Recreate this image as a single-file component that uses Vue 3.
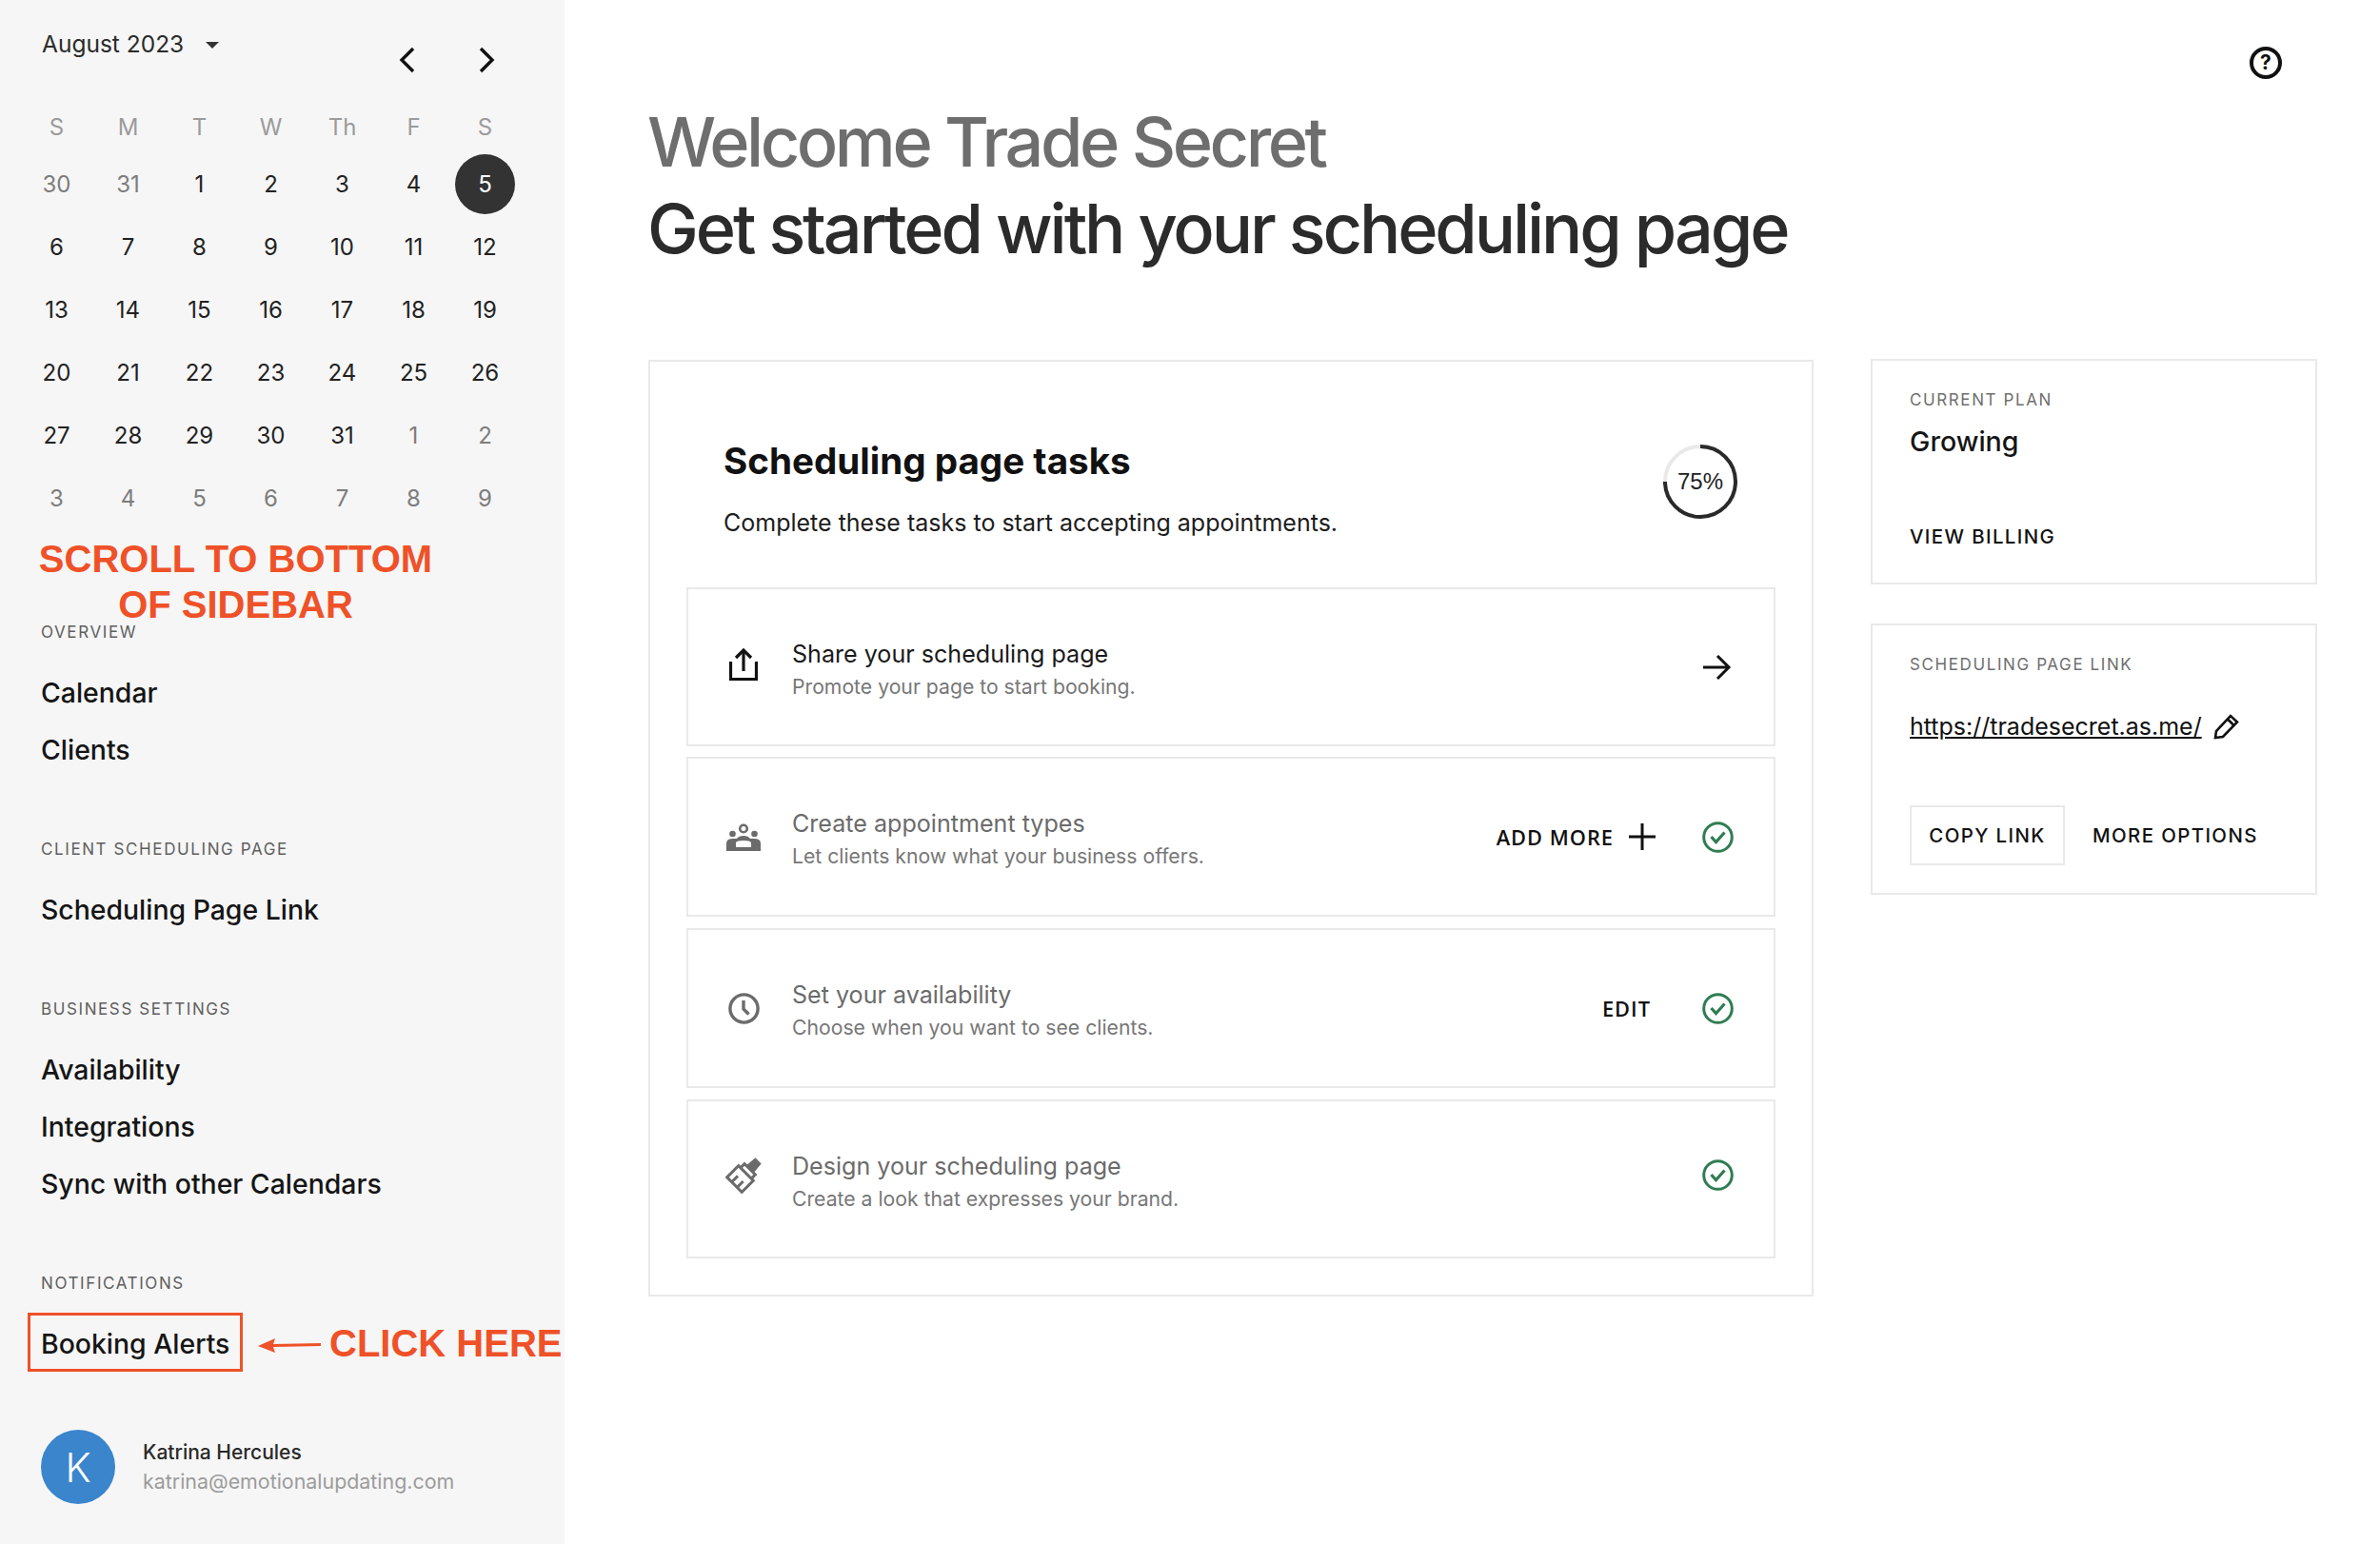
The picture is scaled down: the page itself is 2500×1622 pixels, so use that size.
<script setup>
const weekdays = ['S', 'M', 'T', 'W', 'Th', 'F', 'S']

const days = [
  { n: 30, muted: true }, { n: 31, muted: true }, { n: 1 }, { n: 2 }, { n: 3 }, { n: 4 }, { n: 5, today: true },
  { n: 6 }, { n: 7 }, { n: 8 }, { n: 9 }, { n: 10 }, { n: 11 }, { n: 12 },
  { n: 13 }, { n: 14 }, { n: 15 }, { n: 16 }, { n: 17 }, { n: 18 }, { n: 19 },
  { n: 20 }, { n: 21 }, { n: 22 }, { n: 23 }, { n: 24 }, { n: 25 }, { n: 26 },
  { n: 27 }, { n: 28 }, { n: 29 }, { n: 30 }, { n: 31 }, { n: 1, muted: true }, { n: 2, muted: true },
  { n: 3, muted: true }, { n: 4, muted: true }, { n: 5, muted: true }, { n: 6, muted: true }, { n: 7, muted: true }, { n: 8, muted: true }, { n: 9, muted: true }
]

const navGroups = [
  { label: 'OVERVIEW', items: ['Calendar', 'Clients'] },
  { label: 'CLIENT SCHEDULING PAGE', items: ['Scheduling Page Link'] },
  { label: 'BUSINESS SETTINGS', items: ['Availability', 'Integrations', 'Sync with other Calendars'] },
  { label: 'NOTIFICATIONS', items: ['Booking Alerts'] }
]
</script>

<template>
  <div class="page">
    <aside class="sidebar">
      <div class="cal-head">
        <span class="month">August 2023</span>
        <span class="caret"></span>
        <div class="cal-nav">
          <svg width="20" height="28" viewBox="0 0 20 28" fill="none" stroke="#111" stroke-width="3.4"><path d="M17 2 L5 14 L17 26" /></svg>
          <svg width="20" height="28" viewBox="0 0 20 28" fill="none" stroke="#111" stroke-width="3.4"><path d="M3 2 L15 14 L3 26" /></svg>
        </div>
      </div>
      <div class="cal-grid">
        <div v-for="(d, i) in weekdays" :key="'w' + i" class="weekday">{{ d }}</div>
        <div v-for="(d, i) in days" :key="i" class="day" :class="{ muted: d.muted }">
          <span :class="{ today: d.today }">{{ d.n }}</span>
        </div>
      </div>

      <nav class="nav">
        <div v-for="g in navGroups" :key="g.label" class="nav-group">
          <div class="nav-label">{{ g.label }}</div>
          <div class="nav-items">
            <a v-for="item in g.items" :key="item" class="nav-item">{{ item }}</a>
          </div>
        </div>
      </nav>

      <div class="user">
        <div class="avatar">K</div>
        <div>
          <div class="user-name">Katrina Hercules</div>
          <div class="user-mail">katrina@emotionalupdating.com</div>
        </div>
      </div>

      <!-- red annotations drawn over the screenshot -->
      <div class="note-scroll">SCROLL TO BOTTOM<br />OF SIDEBAR</div>
      <div class="note-box"></div>
      <svg class="note-arrow" width="66" height="20" viewBox="0 0 66 20">
        <path d="M0 11 L18 3 L16 9 L66 8 L66 11 L16 12 L18 18 Z" fill="#ef5128" />
      </svg>
      <div class="note-click">CLICK HERE</div>
    </aside>

    <main class="main">
      <div class="help">?</div>
      <h1 class="title">
        <span class="title-light">Welcome Trade Secret</span>
        <span>Get started with your scheduling page</span>
      </h1>

      <div class="columns">
        <section class="tasks">
          <div class="tasks-head">
            <div>
              <h2>Scheduling page tasks</h2>
              <p>Complete these tasks to start accepting appointments.</p>
            </div>
            <div class="progress">
              <svg width="78" height="78" viewBox="0 0 78 78" fill="none" stroke-width="4">
                <circle cx="39" cy="39" r="37" stroke="#e9e9e9" />
                <path d="M39 2 A37 37 0 1 1 2 39" stroke="#2a2a2a" />
              </svg>
              <span>75%</span>
            </div>
          </div>

          <div class="task task-first">
            <span class="task-icon">
              <svg width="30" height="36" viewBox="0 0 30 36" fill="none" stroke="#111" stroke-width="3.2">
                <path d="M1.5 15 V33.5 H28.5 V15" />
                <path d="M15 3 V25" />
                <path d="M7 11 L15 3 L23 11" />
              </svg>
            </span>
            <div class="task-text">
              <div class="task-title dark">Share your scheduling page</div>
              <div class="task-sub">Promote your page to start booking.</div>
            </div>
            <svg class="arrow" width="32" height="28" viewBox="0 0 32 28" fill="none" stroke="#111" stroke-width="3">
              <path d="M2 14 H29" />
              <path d="M17 2 L29 14 L17 26" />
            </svg>
          </div>

          <div class="task task-mid task-second">
            <span class="task-icon">
              <svg width="36" height="29" viewBox="0 0 36 29" fill="#6b6b6b">
                <circle cx="18" cy="5.5" r="3.8" fill="none" stroke="#6b6b6b" stroke-width="2.6" />
                <circle cx="6.5" cy="11" r="3.3" />
                <circle cx="29.5" cy="11" r="3.3" />
                <path fill-rule="evenodd" d="M0 29 V21 Q0 16 7 16 H11 Q13 13 18 13 Q23 13 25 16 H29 Q36 16 36 21 V29 Z M10 25 H26 V20 Q25 18 18 18 Q11 18 10 20 Z" />
              </svg>
            </span>
            <div class="task-text">
              <div class="task-title">Create appointment types</div>
              <div class="task-sub">Let clients know what your business offers.</div>
            </div>
            <a class="action">ADD MORE</a>
            <svg class="plus" width="30" height="30" viewBox="0 0 30 30" stroke="#111" stroke-width="3">
              <path d="M1 15 H29 M15 1 V29" />
            </svg>
            <svg class="check" width="33" height="33" viewBox="0 0 33 33" fill="none" stroke="#2f7d52">
              <circle cx="16.5" cy="16.5" r="14.8" stroke-width="3" />
              <path d="M9.5 16 L14.5 21.5 L23.5 11.5" stroke-width="3.2" />
            </svg>
          </div>

          <div class="task task-mid">
            <span class="task-icon">
              <svg width="33" height="33" viewBox="0 0 33 33" fill="none" stroke="#6b6b6b" stroke-width="3.4">
                <circle cx="16.5" cy="16.5" r="14.6" />
                <path d="M16 8 V17 L21.5 22.5" />
              </svg>
            </span>
            <div class="task-text">
              <div class="task-title">Set your availability</div>
              <div class="task-sub">Choose when you want to see clients.</div>
            </div>
            <a class="action edit">EDIT</a>
            <svg class="check" width="33" height="33" viewBox="0 0 33 33" fill="none" stroke="#2f7d52">
              <circle cx="16.5" cy="16.5" r="14.8" stroke-width="3" />
              <path d="M9.5 16 L14.5 21.5 L23.5 11.5" stroke-width="3.2" />
            </svg>
          </div>

          <div class="task task-last">
            <span class="task-icon">
              <svg width="38" height="38" viewBox="0 0 38 38" fill="none" stroke="#6b6b6b" stroke-width="3">
                <g transform="translate(2.5 -2.5) rotate(45 19 19)">
                  <path d="M8 19 H30 V36 H8 Z" />
                  <path d="M15 36 V27 M23 36 V27" />
                  <path d="M11 19 V13 H27 V19" />
                  <path d="M15 13 L16 2 H22 L23 13" fill="#6b6b6b" />
                </g>
              </svg>
            </span>
            <div class="task-text">
              <div class="task-title">Design your scheduling page</div>
              <div class="task-sub">Create a look that expresses your brand.</div>
            </div>
            <svg class="check" width="33" height="33" viewBox="0 0 33 33" fill="none" stroke="#2f7d52">
              <circle cx="16.5" cy="16.5" r="14.8" stroke-width="3" />
              <path d="M9.5 16 L14.5 21.5 L23.5 11.5" stroke-width="3.2" />
            </svg>
          </div>
        </section>

        <div class="side">
          <section class="side-card plan">
            <div class="side-label">CURRENT PLAN</div>
            <div class="plan-name">Growing</div>
            <a class="side-link">VIEW BILLING</a>
          </section>
          <section class="side-card share">
            <div class="side-label">SCHEDULING PAGE LINK</div>
            <div class="share-url">
              <a>https://tradesecret.as.me/</a>
              <svg width="28" height="28" viewBox="0 0 28 28" fill="none" stroke="#111" stroke-width="2.6">
                <path d="M2 26 L3 19 L18 3 L25 9.5 L10 25 Z" />
                <path d="M15 6.5 L21.5 13" />
              </svg>
            </div>
            <div class="share-actions">
              <a class="copy">COPY LINK</a>
              <a class="side-link">MORE OPTIONS</a>
            </div>
          </section>
        </div>
      </div>
    </main>
  </div>
</template>

<style>
body {
  background: #fff;
}
</style>

<style scoped>
.page {
  display: flex;
  width: 2500px;
  height: 1622px;
  overflow: hidden;
  font-family: Inter, "Liberation Sans", sans-serif;
  color: #111;
}

.sidebar {
  position: relative;
  flex: none;
  width: 593px;
  background: #f6f6f6;
}

.cal-head {
  display: flex;
  align-items: flex-start;
  height: 107px;
  padding: 0 71px 0 44px;
}

.month {
  margin-top: 31px;
  font-size: 24.5px;
  line-height: 30px;
  color: #2a2a2a;
}

.caret {
  margin: 44px 0 0 23px;
  border-left: 7px solid transparent;
  border-right: 7px solid transparent;
  border-top: 7px solid #333;
}

.cal-nav {
  display: flex;
  gap: 65px;
  margin: 49px 0 0 auto;
}

.cal-grid {
  display: grid;
  grid-template-columns: repeat(7, 75px);
  margin-left: 22px;
}

.weekday {
  height: 53px;
  line-height: 53px;
  text-align: center;
  font-size: 24px;
  color: #9b9b9b;
}

.day {
  display: flex;
  align-items: center;
  justify-content: center;
  height: 66px;
  font-size: 24px;
  color: #222;
}

.day.muted {
  color: #7d7d7d;
}

.today {
  display: flex;
  align-items: center;
  justify-content: center;
  width: 63px;
  height: 63px;
  border-radius: 50%;
  background: #333;
  color: #fff;
}

.nav {
  padding: 98px 0 0 43px;
}

.nav-group + .nav-group {
  margin-top: 64px;
}

.nav-label {
  font-size: 17px;
  line-height: 20px;
  letter-spacing: 1.6px;
  color: #5f5f5f;
}

.nav-items {
  display: flex;
  flex-direction: column;
  margin-top: 24px;
}

.nav-item {
  font-size: 28.4px;
  font-weight: 500;
  line-height: 60px;
  color: #151515;
}

.user {
  display: flex;
  align-items: center;
  gap: 29px;
  margin: 60px 0 0 43px;
}

.avatar {
  display: flex;
  align-items: center;
  justify-content: center;
  width: 78px;
  height: 78px;
  border-radius: 50%;
  background: #3a85cc;
  color: #fff;
  font-size: 42px;
  font-weight: 300;
}

.user-name {
  font-size: 21px;
  font-weight: 500;
  line-height: 30px;
  color: #2a2a2a;
}

.user-mail {
  font-size: 21.4px;
  line-height: 30px;
  color: #9c9c9c;
}

.note-scroll,
.note-click {
  position: absolute;
  font-family: "Liberation Sans", Arial, sans-serif;
  font-weight: 700;
  color: #ef5128;
  white-space: nowrap;
}

.note-scroll {
  left: 21px;
  top: 563px;
  width: 453px;
  text-align: center;
  font-size: 40px;
  line-height: 48px;
}

.note-click {
  left: 346px;
  top: 1387px;
  font-size: 40px;
  line-height: 48px;
}

.note-box {
  position: absolute;
  left: 29px;
  top: 1379px;
  width: 226px;
  height: 62px;
  box-sizing: border-box;
  border: 3px solid #ef5128;
}

.note-arrow {
  position: absolute;
  left: 271px;
  top: 1403px;
}

.main {
  position: relative;
  flex: 1;
  padding: 103px 0 0 88px;
}

.help {
  position: absolute;
  top: 49px;
  right: 103px;
  width: 34px;
  height: 34px;
  box-sizing: border-box;
  border: 4px solid #111;
  border-radius: 50%;
  text-align: center;
  font-size: 21px;
  font-weight: 700;
  line-height: 26px;
}

.title {
  margin: 0 0 0 -1px;
  font-size: 72px;
  font-weight: 500;
  line-height: 91px;
  letter-spacing: -3.1px;
  color: #2b2b2b;
}

.title span {
  display: block;
}

.title .title-light {
  letter-spacing: -3.44px;
  color: #6e6e6e;
}

.columns {
  display: flex;
  align-items: flex-start;
  gap: 60px;
  margin-top: 93px;
}

.tasks {
  display: flex;
  flex-direction: column;
  gap: 12px;
  flex: none;
  width: 1224px;
  box-sizing: border-box;
  border: 2px solid #e9e9e9;
  padding: 0 38px 38px;
}

.tasks-head {
  display: flex;
  justify-content: space-between;
  align-items: flex-start;
  height: 225px;
  padding: 79px 40px 0 39px;
  box-sizing: border-box;
}

.tasks-head h2 {
  margin: 0;
  font-size: 38.6px;
  font-weight: 700;
  line-height: 50px;
  color: #111;
}

.tasks-head p {
  margin: 20px 0 0;
  font-size: 25px;
  line-height: 40px;
  color: #1c1c1c;
}

.progress {
  position: relative;
  display: flex;
  align-items: center;
  justify-content: center;
  margin-top: 8px;
  width: 78px;
  height: 78px;
}

.progress svg {
  position: absolute;
  left: 0;
  top: 0;
}

.progress span {
  font-family: "Liberation Sans", Arial, sans-serif;
  font-size: 24px;
  color: #222;
}

.task {
  display: flex;
  align-items: center;
  height: 167px;
  box-sizing: border-box;
  border: 2px solid #e9e9e9;
  padding: 0 42px 0 36px;
}

.task-mid {
  height: 168px;
}

.task-second {
  margin-top: -1px;
}

.task-icon {
  flex: none;
  display: flex;
  justify-content: center;
  width: 44px;
}

.task-text {
  flex: 1;
  margin-left: 29px;
  padding-top: 6px;
}

.task-title {
  font-size: 25.1px;
  line-height: 34px;
  color: #6b6b6b;
}

.task-title.dark {
  color: #1a1a1a;
}

.task-sub {
  font-size: 21.2px;
  line-height: 34px;
  color: #777;
}

.task-first .task-icon {
  margin-bottom: 6px;
}

.task-last .task-icon,
.task-last .check {
  margin-bottom: 8px;
}

.action {
  font-family: "Open Sans", "Liberation Sans", sans-serif;
  font-size: 21.8px;
  font-weight: 600;
  letter-spacing: 1px;
  color: #111;
}

.action.edit {
  margin-right: 54px;
}

.plus {
  margin: 0 48px 0 15px;
}

.check {
  flex: none;
}

.arrow {
  flex: none;
  margin-right: 2px;
}

.side {
  display: flex;
  flex-direction: column;
  gap: 41px;
  width: 469px;
  margin-top: -1px;
}

.side-card {
  box-sizing: border-box;
  border: 2px solid #e9e9e9;
  padding-left: 39px;
}

.plan {
  height: 237px;
  padding-top: 31px;
}

.share {
  height: 285px;
  padding-top: 31px;
}

.side-label {
  font-size: 17px;
  line-height: 20px;
  letter-spacing: 1.6px;
  color: #6f6f6f;
}

.plan-name {
  margin-top: 16px;
  font-size: 28.6px;
  font-weight: 500;
  line-height: 36px;
  color: #151515;
}

.side-link {
  display: block;
  font-size: 20.4px;
  font-weight: 500;
  letter-spacing: 1.4px;
  color: #111;
}

.plan .side-link {
  margin-top: 69px;
}

.share-url {
  display: flex;
  align-items: center;
  gap: 12px;
  margin-top: 39px;
  font-size: 25px;
  line-height: 32px;
}

.share-url a {
  text-decoration: underline;
}

.share-actions {
  display: flex;
  align-items: center;
  gap: 29px;
  margin-top: 67px;
}

.copy {
  display: flex;
  align-items: center;
  justify-content: center;
  width: 163px;
  height: 63px;
  box-sizing: border-box;
  border: 2px solid #e9e9e9;
  font-size: 20.4px;
  font-weight: 500;
  letter-spacing: 1.4px;
}
</style>
